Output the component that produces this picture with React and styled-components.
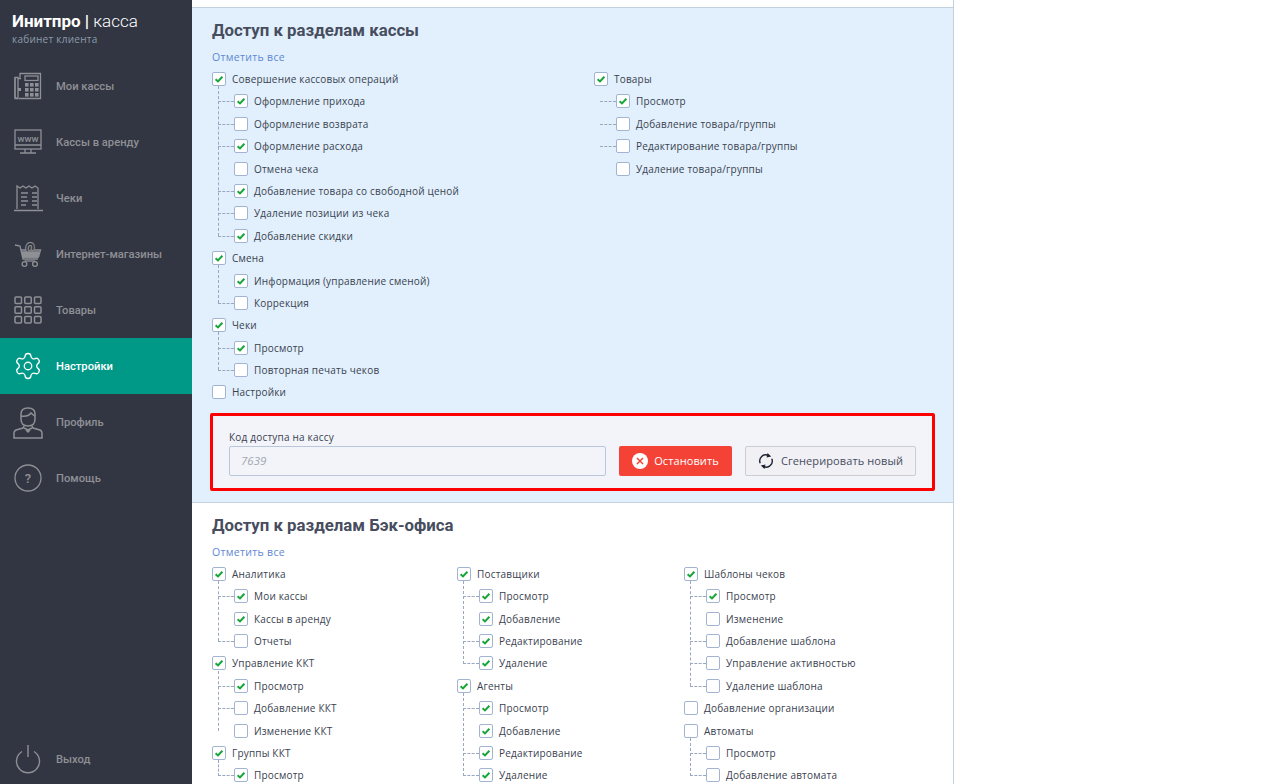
import React from "react";
import styled, { createGlobalStyle } from "styled-components";

const GlobalStyle = createGlobalStyle`
  html, body { margin: 0; padding: 0; height: 100%; background: #fff; overflow: hidden; }
  * { box-sizing: border-box; }
`;

const Page = styled.div`
  display: flex;
  height: 784px;
  overflow: hidden;
  font-family: "Open Sans", sans-serif;
`;

const Sidebar = styled.aside`
  width: 192px;
  flex-shrink: 0;
  display: flex;
  flex-direction: column;
  background: #323642;
`;

const Logo = styled.div`
  height: 58px;
  padding: 11px 0 0 12px;
`;

const LogoTitle = styled.div`
  font-family: Roboto, sans-serif;
  font-size: 17px;
  line-height: 20px;
  color: #fff;
  font-weight: 300;
  b { font-weight: 700; }
`;

const LogoSub = styled.div`
  font-size: 10px;
  line-height: 14px;
  margin-top: 1px;
  color: #8d9bab;
  letter-spacing: 0.25px;
`;

const NavItem = styled.div`
  display: flex;
  align-items: center;
  gap: 14px;
  height: ${(p) => p.$height || 56}px;
  padding-left: 14px;
  font-family: Roboto, sans-serif;
  font-weight: 500;
  font-size: 11.2px;
  color: ${(p) => (p.$active ? "#fff" : "#8f9095")};
  background: ${(p) => (p.$active ? "#009887" : "transparent")};
  margin-top: ${(p) => (p.$bottom ? "auto" : 0)};
`;

const IconSlot = styled.span`
  width: 28px;
  flex-shrink: 0;
  display: flex;
  justify-content: center;
  svg { flex-shrink: 0; display: block; overflow: visible; }
`;

const Main = styled.main`
  width: 762px;
  flex-shrink: 0;
  border-right: 1px solid #c3d0e0;
  padding-top: 7px;
`;

const Section = styled.section`
  padding: 0 18px;
  border-top: ${(p) => (p.$tinted ? "1px solid #c3d0e0" : "none")};
  border-bottom: ${(p) => (p.$tinted ? "1px solid #c3d0e0" : "none")};
  background: ${(p) => (p.$tinted ? "#e1f0fc" : "#fff")};
  padding-bottom: ${(p) => (p.$tinted ? 11 : 0)}px;
`;

const Heading = styled.h2`
  margin: 0;
  padding: 11px 0 0 2px;
  height: 39px;
  font-family: Roboto, sans-serif;
  font-weight: 700;
  font-size: 16.8px;
  line-height: 22px;
  color: #474d5e;
`;

const MarkAll = styled.a`
  display: block;
  margin-left: 2px;
  height: 20.8px;
  font-size: 10.5px;
  line-height: 20px;
  letter-spacing: 0.32px;
  color: #5d88d4;
`;

const Columns = styled.div`
  display: flex;
  padding-left: 2px;
`;

const Column = styled.div`
  width: ${(p) => p.$width}px;
  flex-shrink: 0;
`;

const Row = styled.div`
  position: relative;
  display: flex;
  align-items: center;
  gap: 6px;
  height: 22.4px;
  font-size: 10px;
  letter-spacing: 0.19px;
  color: #3a4150;
  white-space: nowrap;
`;

const ChildRow = styled(Row)`
  padding-left: 22px;
  &::before {
    content: ${(p) => (p.$noDash ? "none" : '""')};
    position: absolute;
    left: 6px;
    top: 50%;
    width: 16px;
    border-top: 1px dashed #9aa7c0;
  }
`;

const Branch = styled.div`
  position: relative;
  &::before {
    content: ${(p) => (p.$noTrunk ? "none" : '""')};
    position: absolute;
    left: 6px;
    top: -4px;
    bottom: 11px;
    border-left: 1px dashed #9aa7c0;
  }
`;

const Box = styled.span`
  width: 14px;
  height: 14px;
  flex-shrink: 0;
  display: flex;
  align-items: center;
  justify-content: center;
  background: #fff;
  border: 1px solid #a3b4d2;
  border-radius: 2px;
`;

const CodeBox = styled.div`
  margin-top: 9.2px;
  height: 78px;
  padding: 14px 16px 0;
  border: 3px solid #f00;
  border-radius: 2px;
  background: #f3f4f9;
`;

const CodeLabel = styled.div`
  height: 14px;
  font-size: 10px;
  line-height: 14px;
  letter-spacing: 0.2px;
  color: #3a4150;
`;

const CodeRow = styled.div`
  display: flex;
  margin-top: 2px;
  gap: 13px;
`;

const CodeInput = styled.div`
  width: 377px;
  height: 30px;
  padding-left: 11px;
  display: flex;
  align-items: center;
  font-size: 11.5px;
  font-style: italic;
  color: #a3a7b0;
  background: #f2f4f9;
  border: 1px solid #b9c7dd;
  border-radius: 2px;
`;

const Button = styled.button`
  height: 30px;
  width: ${(p) => p.$width}px;
  padding: 0;
  display: flex;
  align-items: center;
  justify-content: center;
  gap: ${(p) => (p.$danger ? 6 : 7)}px;
  font-family: "Open Sans", sans-serif;
  font-size: 11px;
  letter-spacing: 0.1px;
  color: ${(p) => (p.$danger ? "#fff" : "#474d5e")};
  background: ${(p) => (p.$danger ? "#f44336" : "#f0f0f5")};
  border: ${(p) => (p.$danger ? "none" : "1px solid #cbcdd3")};
  border-radius: 2px;
`;

const Check = () => (
  <svg width="10" height="10" viewBox="0 0 10 10">
    <path d="M1.6 5.2 L4 7.4 L8.4 2.8" fill="none" stroke="#17a53a" strokeWidth="2" />
  </svg>
);

const CheckBox = ({ on }) => <Box>{on && <Check />}</Box>;

const Tree = ({ label, on, items, noTrunk }) => (
  <>
    <Row>
      <CheckBox on={on} />
      {label}
    </Row>
    {items && (
      <Branch $noTrunk={noTrunk}>
        {items.map((it) => (
          <ChildRow key={it[0]} $noDash={it[2]}>
            <CheckBox on={it[1]} />
            {it[0]}
          </ChildRow>
        ))}
      </Branch>
    )}
  </>
);

const iconProps = { fill: "none", stroke: "#8f9095", strokeWidth: 1.3 };

const FaxIcon = () => (
  <svg width="28" height="28" viewBox="0 0 28 28" {...iconProps}>
    <path d="M1 5.5h3v21H1zM4.5 6.5H7M6 5.5V1.5h20.5v25H5" />
    <path d="M1 5.5V24q0 2.5 3 2.5" />
    <rect x="11" y="4" width="13" height="4.5" />
    <rect x="4" y="16" width="3" height="3" fill="#8f9095" stroke="none" />
    {[0, 1, 2].map((r) =>
      [0, 1, 2].map((c) => (
        <rect key={`${r}${c}`} x={11 + c * 5} y={11 + r * 5} width="3.6" height="3.6" fill="#8f9095" stroke="none" />
      ))
    )}
  </svg>
);

const MonitorIcon = () => (
  <svg width="28" height="28" viewBox="0 0 28 28" {...iconProps}>
    <rect x="1" y="2" width="26" height="19" />
    <path d="M1 17h26M11 21v4M17 21v4M6 25h16" />
    <text x="14" y="13.5" textAnchor="middle" fontFamily="Roboto, sans-serif" fontSize="9.5" fill="#8f9095" stroke="none">www</text>
  </svg>
);

const ReceiptIcon = () => (
  <svg width="30" height="28" viewBox="0 0 30 28" {...iconProps}>
    <path d="M4 25V2l3 2 3-2 3 2 3-2 3 2 3-2 3 2V25M1 26.5h29" />
    <path d="M8 9h7M8 13h6M8 17h7M8 21h5M19 9h5M19 13h5M19 17h5M19 21h5" />
  </svg>
);

const CartIcon = () => (
  <svg width="28" height="28" viewBox="0 0 28 28" {...iconProps}>
    <path d="M1 5l5 1 3 13h15" />
    <path d="M7 10h5M20 10h6.5l-2 7H9" />
    <path d="M8 12h17l-1.5 5H9z" fill="#8f9095" />
    <circle cx="10.5" cy="24" r="2.4" />
    <circle cx="21" cy="24" r="2.4" />
    <path d="M10.5 21h10.5" />
    <text x="16" y="11" textAnchor="middle" fontFamily="Roboto, sans-serif" fontSize="12" fill="#8f9095" stroke="none">@</text>
  </svg>
);

const GridIcon = () => (
  <svg width="28" height="28" viewBox="0 0 28 28" {...iconProps} strokeWidth="1.5">
    {[0, 1, 2].map((r) =>
      [0, 1, 2].map((c) => (
        <rect key={`${r}${c}`} x={1 + c * 9.75} y={1 + r * 9.75} width="6.5" height="6.5" rx="1" />
      ))
    )}
  </svg>
);

const GearIcon = () => (
  <svg width="30" height="30" viewBox="0 0 24 24" fill="none" stroke="#fff" strokeWidth="1.05" strokeLinejoin="round">
    <path d="M9.671 4.136a2.34 2.34 0 0 1 4.659 0 2.34 2.34 0 0 0 3.319 1.915 2.34 2.34 0 0 1 2.33 4.033 2.34 2.34 0 0 0 0 3.831 2.34 2.34 0 0 1-2.33 4.033 2.34 2.34 0 0 0-3.319 1.915 2.34 2.34 0 0 1-4.659 0 2.34 2.34 0 0 0-3.32-1.915 2.34 2.34 0 0 1-2.33-4.033 2.34 2.34 0 0 0 0-3.831A2.34 2.34 0 0 1 6.35 6.051a2.34 2.34 0 0 0 3.319-1.915" />
    <circle cx="12" cy="12" r="3" />
  </svg>
);

const ProfileIcon = () => (
  <svg width="30" height="33" viewBox="0 0 30 33" {...iconProps} strokeWidth="1.5">
    <path d="M8 8q0-6 7-6t7 6v5q0 7-7 7t-7-7z" />
    <path d="M8 10q7 1 10-3 2 2 4 3" />
    <path d="M11 20l-1 2-7 2q-2 1-2 3v5h28v-5q0-2-2-3l-7-2-1-2" />
    <path d="M11 22l4 2 4-2M13 24l2 2 2-2" />
  </svg>
);

const HelpIcon = () => (
  <svg width="28" height="28" viewBox="0 0 28 28" {...iconProps}>
    <circle cx="14" cy="14" r="13" />
    <text x="14" y="18.5" textAnchor="middle" fontFamily="Roboto, sans-serif" fontWeight="500" fontSize="13" fill="#8f9095" stroke="none">?</text>
  </svg>
);

const PowerIcon = () => (
  <svg width="28" height="28" viewBox="0 0 28 28" fill="none" stroke="#8f9095" strokeWidth="1.4">
    <path d="M8 6.5a11.5 11.5 0 1 0 12 0M14 0v12" />
  </svg>
);

const StopIcon = () => (
  <svg width="16" height="16" viewBox="0 0 16 16">
    <circle cx="8" cy="8" r="8" fill="#fff" />
    <path d="M5 5l6 6M11 5l-6 6" stroke="#f44336" strokeWidth="1.5" />
  </svg>
);

const RefreshIcon = () => (
  <svg width="16" height="16" viewBox="0 0 16 16" fill="none" stroke="#1d2230" strokeWidth="1.4">
    <path d="M2.2 10.2A6 6 0 0 1 10.5 2.6" />
    <path d="M13.8 5.8A6 6 0 0 1 5.5 13.4" />
    <path d="M9.5 0l3.7 3.4-4.6 1.2zM6.5 16l-3.7-3.4 4.6-1.2z" fill="#1d2230" stroke="none" />
  </svg>
);

const nav = [
  ["Мои кассы", FaxIcon],
  ["Кассы в аренду", MonitorIcon],
  ["Чеки", ReceiptIcon],
  ["Интернет-магазины", CartIcon],
  ["Товары", GridIcon],
  ["Настройки", GearIcon, true],
  ["Профиль", ProfileIcon],
  ["Помощь", HelpIcon],
];

export default function App() {
  return (
    <Page>
      <GlobalStyle />
      <Sidebar>
        <Logo>
          <LogoTitle>
            <b>Инитпро</b> <b>|</b> касса
          </LogoTitle>
          <LogoSub>кабинет клиента</LogoSub>
        </Logo>
        {nav.map(([label, Icon, active]) => (
          <NavItem key={label} $active={active}>
            <IconSlot>
              <Icon />
            </IconSlot>
            {label}
          </NavItem>
        ))}
        <NavItem $bottom $height={50}>
          <IconSlot>
            <PowerIcon />
          </IconSlot>
          Выход
        </NavItem>
      </Sidebar>
      <Main>
        <Section $tinted>
          <Heading>Доступ к разделам кассы</Heading>
          <MarkAll>Отметить все</MarkAll>
          <Columns>
            <Column $width={382}>
              <Tree
                label="Совершение кассовых операций"
                on
                items={[
                  ["Оформление прихода", true],
                  ["Оформление возврата", false],
                  ["Оформление расхода", true],
                  ["Отмена чека", false, true],
                  ["Добавление товара со свободной ценой", true],
                  ["Удаление позиции из чека", false],
                  ["Добавление скидки", true],
                ]}
              />
              <Tree
                label="Смена"
                on
                items={[
                  ["Информация (управление сменой)", true, true],
                  ["Коррекция", false],
                ]}
              />
              <Tree
                label="Чеки"
                on
                items={[
                  ["Просмотр", true],
                  ["Повторная печать чеков", false],
                ]}
              />
              <Tree label="Настройки" />
            </Column>
            <Column $width={340}>
              <Tree
                label="Товары"
                on
                noTrunk
                items={[
                  ["Просмотр", true],
                  ["Добавление товара/группы", false],
                  ["Редактирование товара/группы", false],
                  ["Удаление товара/группы", false, true],
                ]}
              />
            </Column>
          </Columns>
          <CodeBox>
            <CodeLabel>Код доступа на кассу</CodeLabel>
            <CodeRow>
              <CodeInput>7639</CodeInput>
              <Button $danger $width={113}>
                <StopIcon />
                Остановить
              </Button>
              <Button $width={171}>
                <RefreshIcon />
                Сгенерировать новый
              </Button>
            </CodeRow>
          </CodeBox>
        </Section>
        <Section>
          <Heading>Доступ к разделам Бэк-офиса</Heading>
          <MarkAll>Отметить все</MarkAll>
          <Columns>
            <Column $width={245}>
              <Tree
                label="Аналитика"
                on
                items={[
                  ["Мои кассы", true],
                  ["Кассы в аренду", true, true],
                  ["Отчеты", false],
                ]}
              />
              <Tree
                label="Управление ККТ"
                on
                items={[
                  ["Просмотр", true],
                  ["Добавление ККТ", false],
                  ["Изменение ККТ", false, true],
                ]}
              />
              <Tree label="Группы ККТ" on items={[["Просмотр", true]]} />
            </Column>
            <Column $width={227}>
              <Tree
                label="Поставщики"
                on
                items={[
                  ["Просмотр", true],
                  ["Добавление", true, true],
                  ["Редактирование", true],
                  ["Удаление", true],
                ]}
              />
              <Tree
                label="Агенты"
                on
                items={[
                  ["Просмотр", true],
                  ["Добавление", true, true],
                  ["Редактирование", true],
                  ["Удаление", true],
                ]}
              />
            </Column>
            <Column $width={240}>
              <Tree
                label="Шаблоны чеков"
                on
                items={[
                  ["Просмотр", true],
                  ["Изменение", false, true],
                  ["Добавление шаблона", false],
                  ["Управление активностью", false],
                  ["Удаление шаблона", false],
                ]}
              />
              <Tree label="Добавление организации" />
              <Tree
                label="Автоматы"
                items={[
                  ["Просмотр", false],
                  ["Добавление автомата", false],
                ]}
              />
            </Column>
          </Columns>
        </Section>
      </Main>
    </Page>
  );
}
